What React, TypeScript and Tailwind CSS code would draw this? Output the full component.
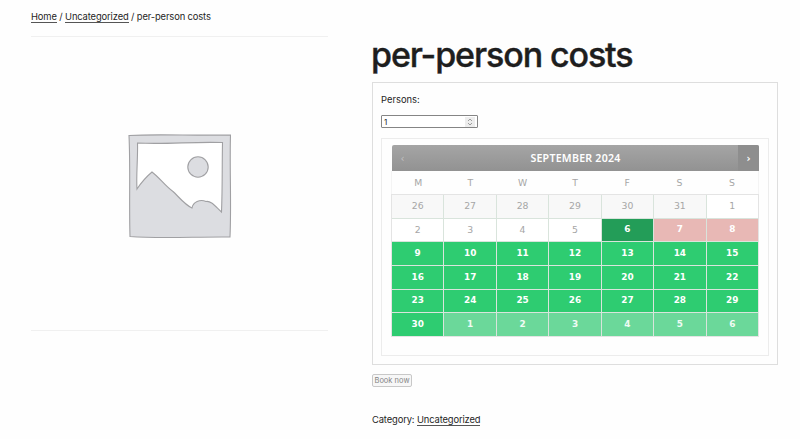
import clsx from "clsx";

const weekDays = ["M", "T", "W", "T", "F", "S", "S"];

const cellStyle = {
  past: "bg-white text-[#a6a6a6]",
  other: "bg-[#f8f8f8] text-[#a6a6a6]",
  today: "bg-[#239d58] text-white font-bold text-[8.9px]",
  booked: "bg-[#e8b8b5] text-white font-bold text-[8.9px]",
  open: "bg-[#2ecc71] text-white font-bold text-[8.9px]",
  next: "bg-[#6bd89a] text-white/90 font-bold text-[8.9px]",
};

type Status = keyof typeof cellStyle;

const weeks: { days: number[]; status: Status[] }[] = [
  {
    days: [26, 27, 28, 29, 30, 31, 1],
    status: ["other", "other", "other", "other", "other", "other", "past"],
  },
  {
    days: [2, 3, 4, 5, 6, 7, 8],
    status: ["past", "past", "past", "past", "today", "booked", "booked"],
  },
  {
    days: [9, 10, 11, 12, 13, 14, 15],
    status: ["open", "open", "open", "open", "open", "open", "open"],
  },
  {
    days: [16, 17, 18, 19, 20, 21, 22],
    status: ["open", "open", "open", "open", "open", "open", "open"],
  },
  {
    days: [23, 24, 25, 26, 27, 28, 29],
    status: ["open", "open", "open", "open", "open", "open", "open"],
  },
  {
    days: [30, 1, 2, 3, 4, 5, 6],
    status: ["open", "next", "next", "next", "next", "next", "next"],
  },
];

const Placeholder = () => {
  return (
    <svg width="106" height="106" viewBox="0 0 106 106" fill="none">
      <path
        d="M2 2.5 C30 .8 65 2.8 103.5 2 C102.5 35 104.5 70 103 104 C70 103.5 35 106 3 103.5 C2 70 3.5 35 2 2.5Z"
        fill="#dcdde1"
        stroke="#a0a0a3"
        strokeWidth="1.1"
      />
      <path
        d="M10.5 10 C40 11.5 65 8.5 95.5 9.5 C95 35 95.5 55 94.5 79 C88 73 84 67.5 79 68.5 C73 66 66 69 65 75 C58 72 51 63 46 58.5 C38 53 33 45 25 39 C19 44 14 50 10 56 C9 43 11 25 10.5 10Z"
        fill="#ffffff"
        stroke="#a0a0a3"
        strokeWidth="1.1"
      />
      <circle
        cx="71"
        cy="34"
        r="10.2"
        fill="#dcdde1"
        stroke="#a0a0a3"
        strokeWidth="1.1"
      />
    </svg>
  );
};

const Calendar = () => {
  return (
    <div className="font-['DejaVu_Sans',sans-serif] w-[367px] text-[9.3px]">
      <div className="flex h-[26px] items-center justify-between overflow-hidden rounded-t-[2px] bg-linear-to-b from-[#a5a5a5] to-[#929292] text-white">
        <button className="flex h-full w-[21px] items-center justify-center text-[10px] text-white/40">
          ‹
        </button>
        <div className="font-['Noto_Sans',sans-serif] pt-px text-[10.6px] font-semibold tracking-[0.25px]">
          SEPTEMBER 2024
        </div>
        <button className="flex h-full w-[21px] items-center justify-center bg-[#8e8e8e] text-[10px] font-bold">
          ›
        </button>
      </div>
      <div className="-ml-px grid h-[23px] grid-cols-7 items-center border-x border-[#f4f4f4] pt-px text-center text-[#a6a6a6]">
        {weekDays.map((day, i) => (
          <div key={i}>{day}</div>
        ))}
      </div>
      <div className="-ml-px grid grid-cols-7 gap-px border border-[#e4e4e4] bg-[#d9e4dc]">
        {weeks.map((week) =>
          week.days.map((day, i) => (
            <div
              key={i}
              className={clsx(
                "flex h-[22.7px] items-center justify-center",
                cellStyle[week.status[i]]
              )}
            >
              {day}
            </div>
          ))
        )}
      </div>
    </div>
  );
};

const App = () => {
  return (
    <div className="font-['Inter',sans-serif] flex h-[439px] w-[800px] flex-col overflow-hidden bg-[#fefefe] pl-[31px] text-[#1e1e1e]">
      <nav className="h-9 pt-[10px] text-[9.4px] leading-[14px] tracking-[-0.13px]">
        <a className="border-b border-[#555]">Home</a> /{" "}
        <a className="border-b border-[#555]">Uncategorized</a> / per-person
        costs
      </nav>
      <div className="flex">
        <div className="flex h-[295px] w-[297px] items-center justify-center border-y border-[#f0f0f0] pt-[5px]">
          <Placeholder />
        </div>
        <div className="ml-11 w-[406px]">
          <h1 className="-ml-px h-[46px] text-[34px] leading-[37px] font-medium tracking-[-1.1px] whitespace-nowrap [-webkit-text-stroke:0.4px_#1e1e1e]">
            per-person costs
          </h1>
          <div className="h-[283px] border border-[#dedede] pr-[9px] pl-[8px] pt-[10px]">
            <div className="text-[9.4px] leading-[14px]">Persons:</div>
            <div className="mt-2 flex h-[13px] w-[97px] items-center justify-between rounded-[1px] border border-[#858585] bg-white pl-[2px] text-[8px]">
              <span>1</span>
              <span className="mr-[2px] flex h-[10px] w-[10px] items-center justify-center bg-[#ededed]">
                <svg
                  width="6"
                  height="8"
                  viewBox="0 0 6 8"
                  fill="none"
                  stroke="#888"
                  strokeWidth=".8"
                >
                  <path d="M1 3 3 1l2 2M1 5l2 2 2-2" />
                </svg>
              </span>
            </div>
            <div className="mt-[10px] h-[218px] w-[388px] border border-[#ececec] pt-[6px] pl-[10px]">
              <Calendar />
            </div>
          </div>
          <button className="mt-[9px] block h-[13px] w-10 rounded-[2px] border border-[#c8c8c8] bg-[#f7f7f7] text-center text-[7.5px] leading-[11px] whitespace-nowrap text-[#858585]">
            Book now
          </button>
          <div className="mt-[26px] text-[9.4px] leading-[14px] tracking-[-0.13px]">
            Category: <a className="border-b border-[#555]">Uncategorized</a>
          </div>
        </div>
      </div>
    </div>
  );
};

export default App;
